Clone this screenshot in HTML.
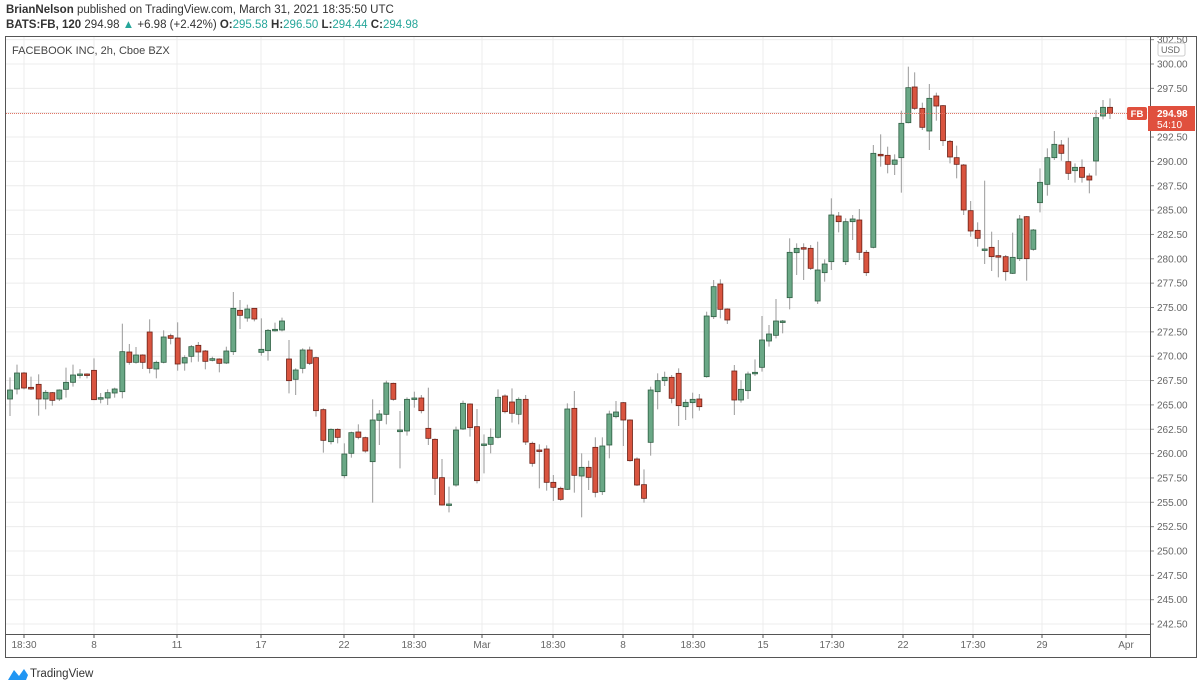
<!DOCTYPE html>
<html><head><meta charset="utf-8"><style>
body{margin:0;width:1200px;height:689px;background:#fff;overflow:hidden;font-family:"Liberation Sans",sans-serif;}
.h{position:absolute;left:6px;font-size:11.5px;color:#333;white-space:nowrap}
.g{color:#26a69a}
</style></head><body>
<div class="h" style="top:4px"><b>BrianNelson</b> published on TradingView.com, March 31, 2021 18:35:50 UTC</div>
<div class="h" style="top:19px"><b>BATS:FB, 120</b> 294.98 <span class="g">▲</span> +6.98 (+2.42%) <b>O:</b><span class="g">295.58</span> <b>H:</b><span class="g">296.50</span> <b>L:</b><span class="g">294.44</span> <b>C:</b><span class="g">294.98</span></div>
<svg id="s" width="1200" height="689" style="position:absolute;left:0;top:0;font-family:'Liberation Sans',sans-serif"></svg>
<script>
var s=document.getElementById('s'),h='';
var vx=[24,94,177,261,344,414,482,553,623,693,763,832,903,973,1042,1126];
vx.forEach(function(x){h+='<line x1="'+x+'" y1="36" x2="'+x+'" y2="634" stroke="#ececec"/>';});
var pl=['307.50','305.00','302.50','300.00','297.50','295.00','292.50','290.00','287.50','285.00','282.50','280.00','277.50','275.00','272.50','270.00','267.50','265.00','262.50','260.00','257.50','255.00','252.50','250.00','247.50','245.00','242.50'];
for(var i=0;i<pl.length;i++){var y=64+(i-3)*24.35;if(y<38)continue;
 h+='<line x1="6" y1="'+y+'" x2="1150" y2="'+y+'" stroke="#ececec"/>';
 if(pl[i]=='295.00')continue;
 h+='<line x1="1150" y1="'+y+'" x2="1154" y2="'+y+'" stroke="#888"/><text x="1157" y="'+(y+3.5)+'" font-size="10" fill="#666">'+pl[i]+'</text>';}
h+='<rect x="1158" y="43" width="27" height="13" rx="2" fill="#fff" stroke="#ccc"/><text x="1161" y="53" font-size="9" fill="#666">USD</text>';
h+='<rect x="5.5" y="36.5" width="1191" height="621" fill="none" stroke="#555"/>';
h+='<line x1="1150.5" y1="36" x2="1150.5" y2="658" stroke="#555"/>';
h+='<line x1="5" y1="634.5" x2="1150" y2="634.5" stroke="#555"/>';
var tl=['18:30','8','11','17','22','18:30','Mar','18:30','8','18:30','15','17:30','22','17:30','29','Apr'];
vx.forEach(function(x,i){h+='<line x1="'+x+'" y1="634" x2="'+x+'" y2="638" stroke="#555"/><text x="'+x+'" y="648" font-size="10" fill="#666" text-anchor="middle">'+tl[i]+'</text>';});
h+='<text x="12" y="54" font-size="11" fill="#444">FACEBOOK INC, 2h, Cboe BZX</text>';
var A=[[30,300,327,262,378,1],[51,249,297,224,313,1],[72,249,294,246,298,0],[93,292,297,260,300,0],[116,283,327,253,377,0],[137,307,327,300,358,1],[157,308,331,306,347,0],[178,300,327,298,333,1],[198,277,298,233,323,1],[219,255,277,224,290,1],[240,252,254,237,265,1],[261,252,254,250,265,0],[282,241,329,205,330,0],[302,323,326,309,340,1],[323,308,324,298,345,1],[344,297,309,293,323,1],[367,185,305,101,325,1],[388,186,217,162,224,0],[408,195,217,171,221,1],[428,195,217,193,237,0],[449,126,235,88,250,0],[469,217,237,212,265,1],[491,141,217,121,220,1],[512,137,145,131,163,0],[533,144,222,97,242,0],[554,203,219,196,242,1],[574,170,199,165,217,1],[595,166,186,156,215,0],[616,183,214,180,238,0],[637,206,211,200,214,1],[658,207,220,205,247,0],[679,183,219,170,222,1],[700,55,185,6,195,1],[720,61,76,30,117,0],[742,57,84,44,95,1],[763,55,87,54,94,0],[784,178,187,85,197,1],[804,121,182,117,212,1],[825,118,121,98,125,1],[846,93,120,83,124,1]];
var B=[[27,57,122,0,160,0],[47,90,118,85,165,1],[68,30,85,25,100,1],[89,30,70,20,75,0],[108,53,212,50,230,0],[130,209,301,205,338,0],[153,268,305,265,313,1],[173,268,292,265,310,0],[193,342,407,310,415,1],[214,278,340,275,353,1],[235,276,292,253,298,0],[256,293,333,290,338,0],[278,240,365,178,488,1],[298,222,241,210,315,1],[319,129,223,122,253,1],[340,130,178,128,182,0],[360,270,275,213,385,1],[381,178,273,172,287,1],[403,174,176,155,203,1],[424,174,212,165,220,0],[445,265,295,143,315,0],[465,298,415,295,465,0],[486,413,495,357,497,0],[507,492,495,440,517,1],[528,270,435,260,440,1],[549,190,267,182,270,1],[570,192,263,190,290,0],[591,260,422,207,430,0],[612,312,314,283,400,1],[632,292,313,265,340,1],[654,172,292,148,295,1],[675,168,215,163,220,0],[696,186,220,145,248,0],[716,178,223,172,253,1],[737,178,306,165,315,0],[757,310,370,305,380,0],[778,330,332,313,445,0],[800,327,427,316,452,0],[820,427,442,405,483,0],[842,445,478,440,482,0],[862,207,448,190,450,1],[883,205,406,153,458,0],[905,382,408,340,532,1],[926,382,412,362,450,0],[946,322,457,292,472,0],[967,318,455,292,465,1],[988,222,315,212,355,1],[1008,216,230,183,235,1],[1030,188,240,186,318,0],[1050,240,362,238,365,0],[1071,357,435,352,438,0],[1092,434,475,388,488,0],[1112,150,307,140,347,1],[1133,122,155,100,208,1]];
var C=[[74,562,572,545,588,1],[95,562,625,555,640,0],[116,550,647,535,708,0],[137,637,650,628,690,1],[158,628,638,608,685,1],[178,627,650,612,662,0],[200,378,560,365,563,1],[221,290,380,270,387,1],[241,282,358,268,385,0],[262,357,390,355,402,0],[283,543,630,525,675,0],[303,598,630,570,638,1],[324,552,602,545,627,1],[345,547,551,508,558,1],[366,450,532,378,545,1],[387,432,453,405,470,1],[408,393,436,327,445,1],[428,393,395,390,430,1],[449,187,323,145,358,1],[470,175,188,160,255,1],[491,173,176,160,270,0],[512,175,235,165,240,0],[533,240,333,155,342,1],[554,222,248,208,275,1],[574,75,215,25,240,1],[596,78,95,66,127,0],[617,95,215,85,225,1],[638,87,95,75,150,1],[658,90,187,57,210,0],[679,187,248,180,258,0]];
var D=[[40,280,562,255,565,1],[62,283,286,223,320,0],[83,286,313,260,340,0],[104,300,313,283,345,1],[124,190,293,152,398,1],[145,83,188,20,190,1],[164,81,145,37,150,0],[187,145,202,128,210,0],[208,115,213,72,270,1],[229,108,138,98,182,0],[249,137,242,135,258,0],[270,244,291,240,310,0],[290,293,313,257,355,0],[311,315,450,312,465,0],[332,452,513,423,530,0],[353,511,535,487,560,0],[374,567,570,362,612,1],[395,562,590,515,633,0],[415,587,590,540,652,0],[437,590,635,585,662,0],[458,592,640,518,642,1],[479,477,596,465,603,1],[500,470,596,468,662,0],[520,510,568,507,572,1],[540,367,428,325,457,1],[562,293,373,265,407,1],[583,253,293,213,300,1],[604,255,280,240,302,0],[625,305,340,233,360,0],[645,322,332,310,368,1],[666,322,352,298,368,0],[688,348,360,340,400,0],[708,173,303,150,347,1],[729,142,168,120,178,1],[750,142,160,115,177,0]];
function seg(a,ox,oy){a.forEach(function(c){var x=ox+c[0]/3,bt=oy+c[1]/3,bb=oy+c[2]/3,wt=oy+c[3]/3,wb=oy+c[4]/3;
 h+='<line x1="'+x+'" y1="'+wt+'" x2="'+x+'" y2="'+wb+'" stroke="#9a9a9a" stroke-width="1"/>';
 var hh=Math.max(bb-bt,1.5);
 h+='<rect x="'+(x-2.5)+'" y="'+bt+'" width="5" height="'+hh+'" fill="'+(c[5]?'#6aa886':'#d9543f')+'" stroke="'+(c[5]?'#2f5e43':'#6b2218')+'" stroke-width="0.8"/>';});}
seg(A,0,290);seg(B,280,340);seg(C,640,190);seg(D,860,60);
h+='<line x1="6" y1="113.5" x2="1127" y2="113.5" stroke="#e27565" stroke-dasharray="1,1"/>';
h+='<rect x="1127" y="107" width="20" height="13" rx="2" fill="#e0503e"/><text x="1137" y="117" font-size="9.5" fill="#fff" font-weight="bold" text-anchor="middle">FB</text>';
h+='<rect x="1148" y="106" width="47" height="25" fill="#e0503e"/><text x="1157" y="117" font-size="10" fill="#fff" font-weight="bold">294.98</text><text x="1157" y="128" font-size="10" fill="#fff">54:10</text>';
h+='<path d="M8 680 L14 670 L19 676 L24 669 L28 675 L26 680 Z" fill="#2196f3"/><text x="30" y="677" font-size="11.5" fill="#333">TradingView</text>';
s.innerHTML=h;
</script>
</body></html>
